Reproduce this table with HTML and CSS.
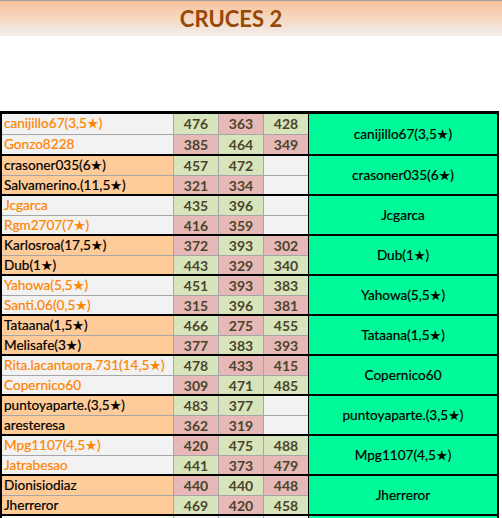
FILE: index.html
```html
<!DOCTYPE html>
<html>
<head>
<meta charset="utf-8">
<link rel="stylesheet" href="styles.css">
</head>
<body>
<header class="banner"><h1 class="title">CRUCES 2</h1></header>
<div class="sheet">
  <div class="group first alt">
    <div class="name">canijillo67(3,5<span class="star">★</span>)</div><div class="num g">476</div><div class="num p">363</div><div class="num g">428</div>
    <div class="result">canijillo67(3,5<span class="star">★</span>)</div>
    <div class="name">Gonzo8228</div><div class="num p">385</div><div class="num g">464</div><div class="num p">349</div>
  </div>
  <div class="group">
    <div class="name">crasoner035(6<span class="star">★</span>)</div><div class="num g">457</div><div class="num g">472</div><div class="num e"></div>
    <div class="result">crasoner035(6<span class="star">★</span>)</div>
    <div class="name">Salvamerino.(11,5<span class="star">★</span>)</div><div class="num p">321</div><div class="num p">334</div><div class="num e"></div>
  </div>
  <div class="group alt">
    <div class="name">Jcgarca</div><div class="num g">435</div><div class="num g">396</div><div class="num e"></div>
    <div class="result">Jcgarca</div>
    <div class="name">Rgm2707(7<span class="star">★</span>)</div><div class="num p">416</div><div class="num p">359</div><div class="num e"></div>
  </div>
  <div class="group">
    <div class="name">Karlosroa(17,5<span class="star">★</span>)</div><div class="num p">372</div><div class="num g">393</div><div class="num p">302</div>
    <div class="result">Dub(1<span class="star">★</span>)</div>
    <div class="name">Dub(1<span class="star">★</span>)</div><div class="num g">443</div><div class="num p">329</div><div class="num g">340</div>
  </div>
  <div class="group alt">
    <div class="name">Yahowa(5,5<span class="star">★</span>)</div><div class="num g">451</div><div class="num p">393</div><div class="num g">383</div>
    <div class="result">Yahowa(5,5<span class="star">★</span>)</div>
    <div class="name">Santi.06(0,5<span class="star">★</span>)</div><div class="num p">315</div><div class="num g">396</div><div class="num p">381</div>
  </div>
  <div class="group">
    <div class="name">Tataana(1,5<span class="star">★</span>)</div><div class="num g">466</div><div class="num p">275</div><div class="num g">455</div>
    <div class="result">Tataana(1,5<span class="star">★</span>)</div>
    <div class="name">Melisafe(3<span class="star">★</span>)</div><div class="num p">377</div><div class="num g">383</div><div class="num p">393</div>
  </div>
  <div class="group alt">
    <div class="name">Rita.lacantaora.731(14,5<span class="star">★</span>)</div><div class="num g">478</div><div class="num p">433</div><div class="num p">415</div>
    <div class="result">Copernico60</div>
    <div class="name">Copernico60</div><div class="num p">309</div><div class="num g">471</div><div class="num g">485</div>
  </div>
  <div class="group">
    <div class="name">puntoyaparte.(3,5<span class="star">★</span>)</div><div class="num g">483</div><div class="num g">377</div><div class="num e"></div>
    <div class="result">puntoyaparte.(3,5<span class="star">★</span>)</div>
    <div class="name">aresteresa</div><div class="num p">362</div><div class="num p">319</div><div class="num e"></div>
  </div>
  <div class="group alt">
    <div class="name">Mpg1107(4,5<span class="star">★</span>)</div><div class="num p">420</div><div class="num g">475</div><div class="num g">488</div>
    <div class="result">Mpg1107(4,5<span class="star">★</span>)</div>
    <div class="name">Jatrabesao</div><div class="num g">441</div><div class="num p">373</div><div class="num p">479</div>
  </div>
  <div class="group">
    <div class="name">Dionisiodiaz</div><div class="num p">440</div><div class="num g">440</div><div class="num p">448</div>
    <div class="result">Jherreror</div>
    <div class="name">Jherreror</div><div class="num g">469</div><div class="num p">420</div><div class="num g">458</div>
  </div>
  <div class="group blank">
    <div class="name"></div><div class="num e"></div><div class="num e"></div><div class="num e"></div>
    <div class="result"></div>
    <div class="name"></div><div class="num e"></div><div class="num e"></div><div class="num e"></div>
  </div>
</div>
</body>
</html>
```
FILE: styles.css
```css
html, body {
  margin: 0;
  padding: 0;
  background: #ffffff;
}
body {
  font-family: Lato, "Liberation Sans", "DejaVu Sans", sans-serif;
  font-size: 13.6px;
  color: #000;
}
.banner {
  height: 35px;
  border-top: 1px solid #a0a0a0;
  background: linear-gradient(to bottom, #f8c29a 0%, #f4dac6 55%, #f1efee 100%);
}
.title {
  margin: 0;
  padding-right: 40px;
  text-align: center;
  font-size: 22px;
  line-height: 35px;
  font-weight: 700;
  color: #974706;
}
.sheet {
  margin-top: 75px;
  width: 495px;
  border-left: 2px solid #000;
  border-right: 2px solid #000;
}
.group {
  display: grid;
  grid-template-columns: 171px 44px 44px 44px 188px;
  grid-template-rows: 19px 18px;
  gap: 1px;
  background: #a6a6a6;
  border-top: 2px solid #000;
}
.group.first {
  border-top-width: 3px;
  grid-template-rows: 20px 19px;
}
.name {
  background: #ffcc99;
  padding-left: 2px;
  line-height: 19px;
  white-space: nowrap;
  overflow: hidden;
  color: #000;
  -webkit-text-stroke: 0.2px currentColor;
}
.alt .name {
  background: #f2f2f2;
  color: #ff8400;
}
.blank .name {
  background: #f6f6f6;
}
.star {
  font-family: "DejaVu Sans", sans-serif;
  font-size: 13px;
}
.num {
  text-align: center;
  font-weight: 700;
  font-size: 14px;
  color: #4a452a;
  line-height: 19px;
}
.num.g { background: #d8e4bc; }
.num.p { background: #e6b8b7; }
.num.e { background: #f2f2f2; }
.result {
  grid-column: 5;
  grid-row: 1 / span 2;
  margin-left: -1px;
  border-left: 1px solid #000;
  background: #00fa9a;
  display: flex;
  align-items: center;
  justify-content: center;
  white-space: nowrap;
  -webkit-text-stroke: 0.2px currentColor;
}
```
